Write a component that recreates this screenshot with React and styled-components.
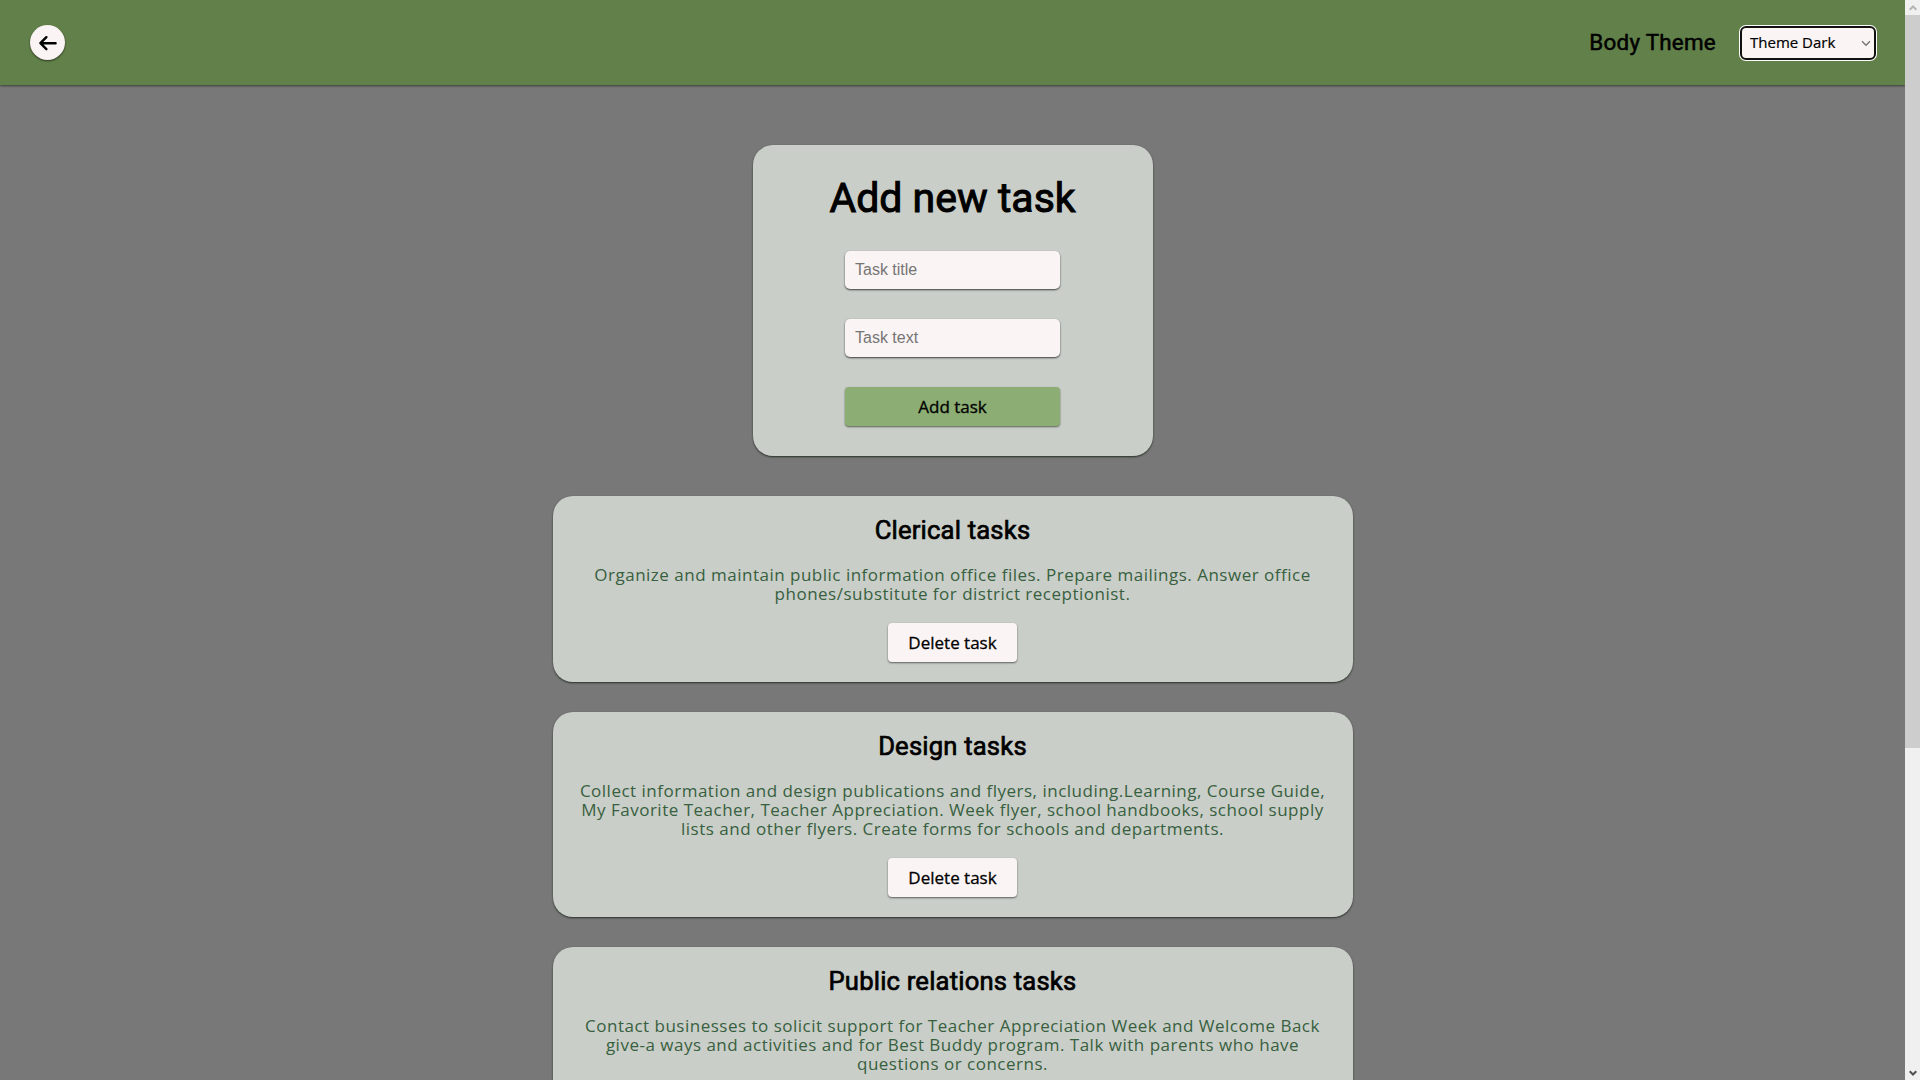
import React from "react";
import styled, { createGlobalStyle } from "styled-components";

const GlobalStyle = createGlobalStyle`
  * { box-sizing: border-box; margin: 0; padding: 0; }
  body { margin: 0; background: #787878; }
`;

const Window = styled.div`
  display: flex;
  height: 1080px;
  overflow: hidden;
`;

const Page = styled.div`
  flex: 1;
  min-width: 0;
  overflow: hidden;
  background: #787878;
  display: flex;
  flex-direction: column;
`;

const Header = styled.header`
  flex: none;
  height: 85px;
  padding: 0 29px 0 30px;
  display: flex;
  align-items: center;
  justify-content: space-between;
  background: #628049;
  box-shadow: 0 1px 2px rgba(30, 40, 30, 0.7);
`;

const BackButton = styled.button`
  width: 35px;
  height: 35px;
  border: none;
  border-radius: 50%;
  background: #faf4f4;
  box-shadow: 0 1px 2px rgba(0, 0, 0, 0.6);
  display: flex;
  align-items: center;
  justify-content: center;
`;

const ThemePicker = styled.div`
  display: flex;
  align-items: center;
  gap: 24px;
`;

const ThemeLabel = styled.span`
  font: 400 22.4px/27px Roboto, sans-serif;
  letter-spacing: 0.25px;
  color: #000;
  -webkit-text-stroke: 0.5px #000;
`;

const SelectBox = styled.div`
  position: relative;
  width: 136px;
  height: 34px;
`;

const Select = styled.select`
  appearance: none;
  width: 100%;
  height: 100%;
  padding: 0 8px 2px;
  border: 2px solid #101010;
  border-radius: 6px;
  outline: none;
  box-shadow: 0 0 0 1px #fff;
  background: #faf4f4;
  color: #000;
  font: 400 15px/20px "Open Sans", sans-serif;
  -webkit-text-stroke: 0.2px #000;
`;

const Chevron = styled.svg`
  position: absolute;
  right: 5px;
  top: 14px;
  pointer-events: none;
`;

const Main = styled.main`
  display: flex;
  flex-direction: column;
  align-items: center;
  padding-top: 60px;
`;

const Card = styled.section`
  flex: none;
  display: flex;
  flex-direction: column;
  align-items: center;
  background: #cacec8;
  border-radius: 20px;
  box-shadow: 0 1px 2px rgba(20, 30, 20, 0.8);
`;

const FormCard = styled(Card)`
  width: 400px;
  padding: 30px;
  gap: 30px;
  margin-bottom: 40px;
`;

const FormTitle = styled.h1`
  font: 400 41px/46px Roboto, sans-serif;
  color: #000;
  -webkit-text-stroke: 1px #000;
  white-space: nowrap;
`;

const Input = styled.input`
  width: 215px;
  height: 38px;
  padding: 0 10px;
  border: none;
  border-radius: 5px;
  background: #faf4f4;
  box-shadow: 0 1px 2px rgba(0, 0, 0, 0.7);
  font: 400 16px "Liberation Sans", Arial, sans-serif;
  &::placeholder { color: #757575; }
`;

const Button = styled.button`
  width: ${(p) => p.$width}px;
  height: 39px;
  border: none;
  border-radius: 4px;
  background: ${(p) => (p.$primary ? "#8cad73" : "#faf4f4")};
  box-shadow: 0 1px 2px rgba(0, 0, 0, 0.55);
  color: #000;
  font: 400 17px/22px "Open Sans", sans-serif;
  -webkit-text-stroke: 0.3px #000;
`;

const TaskList = styled.div`
  display: flex;
  flex-direction: column;
  gap: 30px;
`;

const TaskCard = styled(Card)`
  width: 800px;
  padding: 20px;
  gap: 20px;
`;

const TaskTitle = styled.h2`
  font: 400 25.6px/29px Roboto, sans-serif;
  letter-spacing: 0.2px;
  color: #000;
  -webkit-text-stroke: 0.7px #000;
`;

const TaskText = styled.p`
  font: 400 17px/19px "Open Sans", sans-serif;
  letter-spacing: 0.5px;
  color: #37603f;
  text-align: center;
  white-space: pre-line;
`;

const Scrollbar = styled.div`
  width: 15px;
  flex: none;
  display: flex;
  flex-direction: column;
  background: #f0f0f0;
`;

const ScrollButton = styled.div`
  height: 15px;
  display: flex;
  align-items: center;
  justify-content: center;
`;

const Thumb = styled.div`
  height: 733px;
  margin-bottom: auto;
  background: #cdcdcd;
`;

const tasks = [
  {
    title: "Clerical tasks",
    text: "Organize and maintain public information office files. Prepare mailings. Answer office\nphones/substitute for district receptionist.",
  },
  {
    title: "Design tasks",
    text: "Collect information and design publications and flyers, including.Learning, Course Guide,\nMy Favorite Teacher, Teacher Appreciation. Week flyer, school handbooks, school supply\nlists and other flyers. Create forms for schools and departments.",
  },
  {
    title: "Public relations tasks",
    text: "Contact businesses to solicit support for Teacher Appreciation Week and Welcome Back\ngive-a ways and activities and for Best Buddy program. Talk with parents who have\nquestions or concerns.",
  },
];

export default function App() {
  return (
    <>
      <GlobalStyle />
      <Window>
        <Page>
          <Header>
            <BackButton aria-label="Back">
              <svg width="19" height="16" viewBox="0 0 19 16" fill="none" stroke="#000" strokeWidth="2.4" strokeLinecap="round" strokeLinejoin="round">
                <path d="M8.4 2.2L2.4 8.2l6 6M2.9 8.2h14.7" />
              </svg>
            </BackButton>
            <ThemePicker>
              <ThemeLabel>Body Theme</ThemeLabel>
              <SelectBox>
                <Select defaultValue="dark">
                  <option value="dark">Theme Dark</option>
                </Select>
                <Chevron width="10" height="7" viewBox="0 0 10 7" fill="none" stroke="#757575" strokeWidth="1.4">
                  <path d="M1 1.2l4 4 4-4" />
                </Chevron>
              </SelectBox>
            </ThemePicker>
          </Header>
          <Main>
            <FormCard>
              <FormTitle>Add new task</FormTitle>
              <Input placeholder="Task title" />
              <Input placeholder="Task text" />
              <Button $primary $width={215}>Add task</Button>
            </FormCard>
            <TaskList>
              {tasks.map((task) => (
                <TaskCard key={task.title}>
                  <TaskTitle>{task.title}</TaskTitle>
                  <TaskText>{task.text}</TaskText>
                  <Button $width={129}>Delete task</Button>
                </TaskCard>
              ))}
            </TaskList>
          </Main>
        </Page>
        <Scrollbar>
          <ScrollButton>
            <svg width="8" height="6" viewBox="0 0 8 6" fill="none" stroke="#b4b4b4" strokeWidth="2">
              <path d="M.7 4.8L4 1.5l3.3 3.3" />
            </svg>
          </ScrollButton>
          <Thumb />
          <ScrollButton>
            <svg width="8" height="6" viewBox="0 0 8 6" fill="none" stroke="#505050" strokeWidth="2">
              <path d="M.7 1.2L4 4.5l3.3-3.3" />
            </svg>
          </ScrollButton>
        </Scrollbar>
      </Window>
    </>
  );
}
